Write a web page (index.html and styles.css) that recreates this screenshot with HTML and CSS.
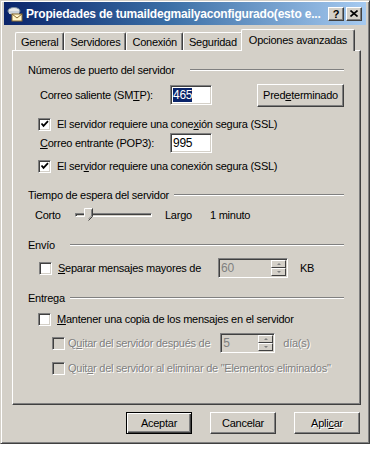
FILE: index.html
```html
<!DOCTYPE html>
<html lang="es">
<head>
  <meta charset="UTF-8">
  <title>Propiedades de la cuenta</title>
  <link rel="stylesheet" href="styles.css">
</head>
<body>

  <div class="window">
    <div class="titlebar">
      <svg class="app-icon" width="16" height="16" viewBox="0 0 16 16">
        <ellipse cx="7" cy="5" rx="6" ry="3.5" fill="#e8e8e8" stroke="#7a8a9a"/>
        <rect x="2" y="5" width="10" height="3" fill="#c8d0d8"/>
        <rect x="5" y="8" width="10" height="7" fill="#fff4c8" stroke="#8a6a30"/>
        <polyline points="5,8 10,12 15,8" fill="none" stroke="#8a6a30"/>
      </svg>
      <span class="title-text">Propiedades de tumaildegmailyaconfigurado(esto e...</span>
      <div class="caption-btns">
        <span class="cap-btn help">?</span>
        <span class="cap-btn close">
          <svg width="8" height="7" viewBox="0 0 8 7"><path d="M0.5 0.5 L7.5 6.5 M7.5 0.5 L0.5 6.5" stroke="#000" stroke-width="1.6"/></svg>
        </span>
      </div>
    </div>

    <div class="tabs">
      <div class="tab">General</div>
      <div class="tab">Servidores</div>
      <div class="tab">Conexión</div>
      <div class="tab">Seguridad</div>
      <div class="tab active">Opciones avanzadas</div>
    </div>

    <div class="panel">
      <div class="group-title gap-lg">Números de puerto del servidor</div>

      <div class="row row-smtp">
        <span class="field-label">Correo saliente (SM<u>T</u>P):</span>
        <span class="textbox"><span class="sel">465</span></span>
        <button class="btn btn-default-pos">Pred<u>e</u>terminado</button>
      </div>
      <label class="check-row r-check1">
        <span class="checkbox checked"></span>
        <span>El servidor requiere una cone<u>x</u>ión segura (SSL)</span>
      </label>
      <div class="row row-pop">
        <span class="field-label"><u>C</u>orreo entrante (POP3):</span>
        <span class="textbox">995</span>
      </div>
      <label class="check-row r-check2">
        <span class="checkbox checked"></span>
        <span>El ser<u>v</u>idor requiere una conexión segura (SSL)</span>
      </label>

      <div class="group-title g2">Tiempo de espera del servidor</div>
      <div class="row slider-row">
        <span class="slider-lbl">Corto</span>
        <span class="slider">
          <span class="track"></span>
          <svg class="thumb" width="9" height="13" viewBox="0 0 9 13">
            <path d="M0.5 0.5 H8.5 V8.5 L4.5 12.5 L0.5 8.5 Z" fill="#d4d0c8"/>
            <path d="M0.5 8.5 V0.5 H8" fill="none" stroke="#fff"/>
            <path d="M8.5 0.5 V8.5 L4.5 12.5" fill="none" stroke="#404040"/>
            <path d="M7.5 1.5 V8 L4.5 11" fill="none" stroke="#808080"/>
          </svg>
        </span>
        <span class="largo">Largo</span>
        <span class="minuto">1 minuto</span>
      </div>

      <div class="group-title gap-lg g3">Envío</div>
      <div class="row split-row">
        <label class="check-inline">
          <span class="checkbox"></span>
          <span><u>S</u>eparar mensajes mayores de</span>
        </label>
        <span class="spin spin-kb">
          <span class="spin-val">60</span>
          <span class="spin-btns"><span class="up"></span><span class="down"></span></span>
        </span>
        <span class="unit">KB</span>
      </div>

      <div class="group-title g4">Entrega</div>
      <label class="check-row r-keep">
        <span class="checkbox"></span>
        <span><u>M</u>antener una copia de los mensajes en el servidor</span>
      </label>
      <div class="row sub-row r-after">
        <span class="checkbox disabled"></span>
        <span class="dis">Q<u>u</u>itar del servidor después de</span>
        <span class="spin spin-days">
          <span class="spin-val">5</span>
          <span class="spin-btns"><span class="up"></span><span class="down"></span></span>
        </span>
        <span class="dis days">día(s)</span>
      </div>
      <div class="row sub-row r-deleted">
        <span class="checkbox disabled"></span>
        <span class="dis">Quit<u>a</u>r del servidor al eliminar de "Elementos eliminados"</span>
      </div>
    </div>

    <div class="footer">
      <button class="btn btn-foot default">Aceptar</button>
      <button class="btn btn-foot">Cancelar</button>
      <button class="btn btn-foot dis">Apli<u>c</u>ar</button>
    </div>
  </div>

</body>
</html>
```

FILE: styles.css
```css
body {
  margin: 0;
  background: #fff;
  font-family: 'Liberation Sans', Arial, sans-serif;
  font-size: 11px;
  letter-spacing: -0.25px;
  color: #000;
}

u {
  text-decoration-thickness: 1px;
  text-underline-offset: 1px;
}

.window {
  width: 370px;
  height: 444px;
  box-sizing: border-box;
  background: #d4d0c8;
  border: 1px solid;
  border-color: #d4d0c8 #404040 #404040 #d4d0c8;
  box-shadow: inset 1px 1px #fff, inset -1px -1px #808080;
  padding: 1px 3px;
  display: flex;
  flex-direction: column;
}

/* title bar */
.titlebar {
  height: 23px;
  flex: none;
  display: flex;
  align-items: center;
  padding: 0 4px 0 3px;
  background: linear-gradient(to right, #0a246a, #3a6ea5 45%, #a6caf0);
  color: #fff;
  font-weight: bold;
  font-size: 12px;
  letter-spacing: -0.2px;
}

.app-icon {
  flex: none;
  margin-right: 3px;
}

.title-text {
  flex: 1;
  white-space: nowrap;
}

.caption-btns {
  display: flex;
  gap: 2px;
  letter-spacing: 0;
}

.cap-btn {
  width: 16px;
  height: 14px;
  box-sizing: border-box;
  background: #d4d0c8;
  border: 1px solid;
  border-color: #fff #404040 #404040 #fff;
  box-shadow: inset -1px -1px #808080;
  color: #000;
  display: flex;
  align-items: center;
  justify-content: center;
  font-size: 11px;
  font-weight: bold;
}

/* tabs */
.tabs {
  display: flex;
  align-items: flex-end;
  flex: none;
  height: 21px;
  margin: 4px 0 0 11px;
}

.tab {
  height: 18px;
  box-sizing: border-box;
  padding: 0 5px;
  border: 1px solid;
  border-bottom: none;
  border-color: #fff #404040 #fff #fff;
  box-shadow: inset -1px 0 #808080;
  border-radius: 2px 2px 0 0;
  display: flex;
  align-items: center;
  white-space: nowrap;
}

.tab.active {
  height: 22px;
  margin: 0 -2px -1px -2px;
  padding: 0 7px 2px 7px;
  background: #d4d0c8;
  position: relative;
  z-index: 1;
}

.panel {
  flex: none;
  margin-left: 8px;
  width: 349px;
  height: 355px;
  box-sizing: border-box;
  border: 1px solid;
  border-color: #fff #404040 #404040 #fff;
  box-shadow: inset -1px -1px #808080;
  padding: 12px 16px 0 15px;
}

/* group headers */
.group-title {
  height: 14px;
  display: flex;
  align-items: center;
  white-space: nowrap;
}

.group-title::after {
  content: "";
  flex: 1;
  height: 0;
  border-top: 1px solid #808080;
  border-bottom: 1px solid #fff;
  margin-left: 5px;
}

.group-title.gap-lg::after {
  margin-left: 15px;
}

.g2 { margin-top: 14px; }
.g3 { margin-top: 13px; }
.g4 { margin-top: 13px; }

/* rows */
.row {
  display: flex;
  align-items: center;
  padding-left: 12px;
  white-space: nowrap;
}

.row-smtp {
  height: 22px;
  margin-top: 7px;
}

.row-pop {
  height: 20px;
  margin-top: 1px;
}

.field-label {
  width: 130px;
  flex: none;
}

.textbox {
  width: 42px;
  height: 20px;
  box-sizing: border-box;
  background: #fff;
  border: 1px solid;
  border-color: #808080 #fff #fff #808080;
  box-shadow: inset 1px 1px #404040, inset -1px -1px #d4d0c8;
  padding: 0 2px;
  display: flex;
  align-items: center;
  font-size: 12px;
}

.sel {
  background: #0a246a;
  color: #fff;
}

.check-row {
  display: flex;
  align-items: center;
  height: 16px;
  padding-left: 10px;
  white-space: nowrap;
}

.r-check1 { margin-top: 10px; }
.r-check2 { margin-top: 5px; }
.r-keep { margin-top: 6px; }

.checkbox {
  width: 13px;
  height: 13px;
  box-sizing: border-box;
  flex: none;
  margin-right: 6px;
  background: #fff;
  border: 1px solid;
  border-color: #808080 #fff #fff #808080;
  box-shadow: inset 1px 1px #404040, inset -1px -1px #d4d0c8;
}

.checkbox.checked {
  background: #fff url("data:image/svg+xml,%3Csvg xmlns='http://www.w3.org/2000/svg' width='11' height='11'%3E%3Cpath d='M2.5 4.5 L4.5 6.8 L9 2.2' fill='none' stroke='%23000' stroke-width='1.8'/%3E%3C/svg%3E") no-repeat 0 0;
}

.checkbox.disabled {
  background: #d4d0c8;
}

.dis {
  color: #808080;
  text-shadow: 1px 1px 0 #fff;
}

.btn {
  font-family: inherit;
  font-size: 11px;
  letter-spacing: inherit;
  color: #000;
  background: #d4d0c8;
  border: 1px solid;
  border-color: #fff #404040 #404040 #fff;
  box-shadow: inset -1px -1px #808080;
  padding: 0;
  height: 22px;
}

.btn-default-pos {
  margin-left: auto;
  width: 87px;
  height: 23px;
}

/* slider */
.slider-row {
  height: 20px;
  margin-top: 3px;
  padding-left: 7px;
}

.slider-lbl {
  width: 40px;
}

.slider {
  width: 77px;
  height: 14px;
  display: flex;
  align-items: center;
  position: relative;
}

.track {
  width: 100%;
  height: 4px;
  box-sizing: border-box;
  border: 1px solid;
  border-color: #808080 #fff #fff #808080;
  box-shadow: inset 1px 1px #404040;
}

.thumb {
  position: absolute;
  left: 9px;
  top: 0;
}

.largo {
  margin-left: 13px;
  width: 45px;
}

/* spin controls */
.split-row {
  height: 20px;
  margin-top: 6px;
  padding-left: 11px;
}

.check-inline {
  display: flex;
  align-items: center;
  width: 179px;
}

.spin {
  display: flex;
  height: 20px;
  box-sizing: border-box;
  background: #d4d0c8;
  border: 1px solid;
  border-color: #808080 #fff #fff #808080;
  box-shadow: inset 1px 1px #404040;
  padding: 1px 1px 1px 2px;
}

.spin-kb { width: 70px; }
.spin-days { width: 55px; margin-left: 10px; }

.spin-val {
  flex: 1;
  color: #808080;
  font-size: 12px;
  display: flex;
  align-items: center;
}

.spin-btns {
  display: flex;
  flex-direction: column;
  width: 15px;
}

.spin-btns span {
  flex: 1;
  box-sizing: border-box;
  border: 1px solid;
  border-color: #fff #404040 #404040 #fff;
  display: flex;
  align-items: center;
  justify-content: center;
}

.spin-btns .up::before {
  content: "";
  border: 2px solid transparent;
  border-bottom-color: #808080;
  border-top: none;
}

.spin-btns .down::before {
  content: "";
  border: 2px solid transparent;
  border-top-color: #808080;
  border-bottom: none;
}

.unit {
  margin-left: 12px;
}

.sub-row {
  padding-left: 24px;
}

.sub-row .checkbox {
  margin-right: 3px;
}

.r-after {
  height: 18px;
  margin-top: 7px;
}

.r-deleted {
  height: 16px;
  margin-top: 8px;
}

.days {
  margin-left: 8px;
}

/* bottom buttons */
.footer {
  display: flex;
  justify-content: flex-end;
  gap: 18px;
  margin-top: 7px;
  padding-right: 6px;
}

.btn-foot {
  width: 66px;
}

.btn-foot.default {
  border: 1px solid #000;
  box-shadow: inset 1px 1px #fff, inset -1px -1px #404040, inset -2px -2px #808080;
}
```
